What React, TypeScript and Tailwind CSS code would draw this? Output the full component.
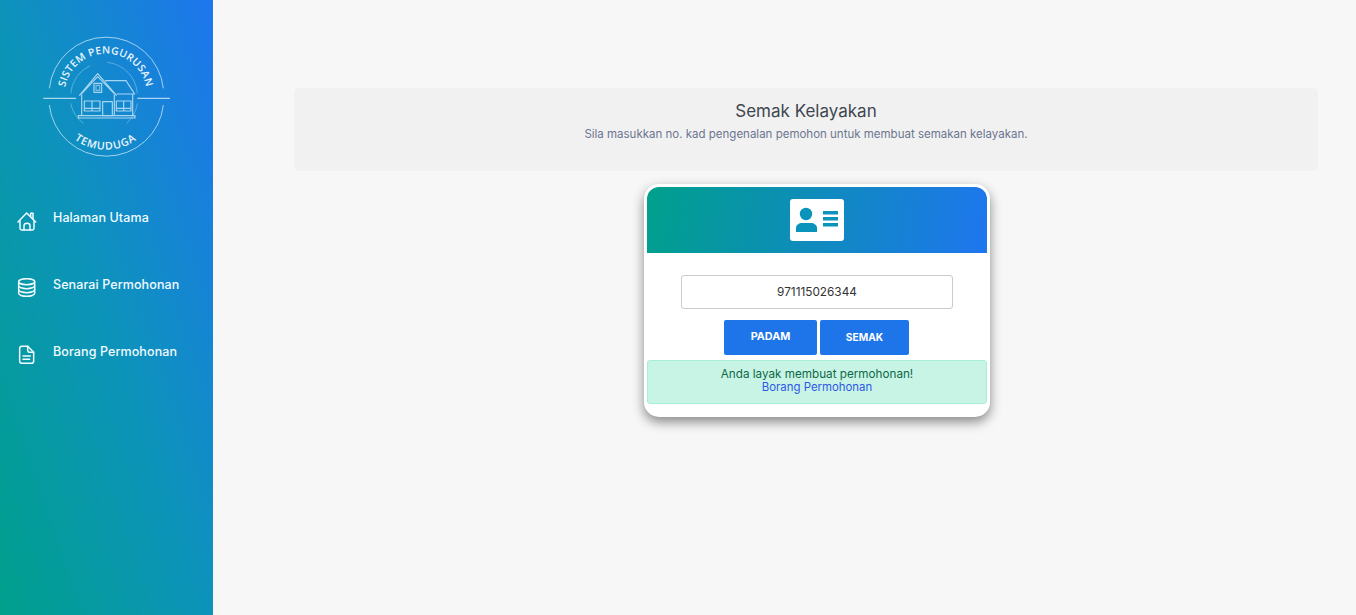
const font = { fontFamily: 'Inter, "Noto Sans", sans-serif' };

function HomeIcon() {
  return (
    <svg viewBox="0 0 60 60" className="h-[20px] w-[20px] shrink-0" fill="none" stroke="currentColor" strokeWidth="4.5" strokeLinecap="round" strokeLinejoin="round">
      <path d="M 3 33 L 29 6 L 56 33" />
      <path d="M 9 30 V 52 Q 9 57 14 57 H 46 Q 51 57 51 52 V 30" />
      <path d="M 21 57 V 44 Q 21 37 30 37 Q 39 37 39 44 V 57" />
      <path d="M 41 17 V 7 H 48 V 24" />
    </svg>
  );
}

function DatabaseIcon() {
  return (
    <svg viewBox="0 0 60 60" className="h-[20px] w-[20px] shrink-0" fill="none" stroke="currentColor" strokeWidth="4.5" strokeLinecap="round" strokeLinejoin="round">
      <ellipse cx="29" cy="11" rx="24" ry="9" />
      <path d="M 5 11 V 46 C 5 51 16 55 29 55 C 42 55 53 51 53 46 V 11" />
      <path d="M 5 23 C 5 28 16 32 29 32 C 42 32 53 28 53 23" />
      <path d="M 5 35 C 5 40 16 44 29 44 C 42 44 53 40 53 35" />
    </svg>
  );
}

function FileIcon() {
  return (
    <svg viewBox="0 0 60 60" className="h-[20px] w-[20px] shrink-0" fill="none" stroke="currentColor" strokeWidth="4.5" strokeLinecap="round" strokeLinejoin="round">
      <path d="M 32 4 H 15 Q 8 4 8 11 V 48 Q 8 55 15 55 H 43 Q 50 55 50 48 V 22 Z" />
      <path d="M 32 4 V 15 Q 32 22 39 22 H 50" />
      <path d="M 18 33 H 40 M 18 43 H 38" />
    </svg>
  );
}

const navItems = [
  { label: 'Halaman Utama', icon: HomeIcon },
  { label: 'Senarai Permohonan', icon: DatabaseIcon },
  { label: 'Borang Permohonan', icon: FileIcon },
];

function Logo() {
  return (
    <svg viewBox="0 0 510 435" className="ml-[20px] mt-[25px] h-[145px] w-[170px]" fill="none" stroke="#cfe9fb">
      <defs>
        <path id="arcTop" d="M 133 210 A 124 124 0 0 1 381 210" />
        <path id="arcBottom" d="M 97 214 A 160 160 0 0 0 417 214" />
      </defs>
      {/* outer ring */}
      <path d="M 88 190 A 172 172 0 0 1 430 190" strokeWidth="3" opacity="0.75" />
      <path d="M 88 240 A 172 172 0 0 0 430 240" strokeWidth="3" opacity="0.75" />
      <path d="M 70 220 H 168 M 352 220 H 450" strokeWidth="4" opacity="0.8" />
      {/* inner ring */}
      <path d="M 152 205 A 101 101 0 0 1 210 122" strokeWidth="2.5" opacity="0.45" />
      <path d="M 262 112 A 101 101 0 0 1 352 205" strokeWidth="2.5" opacity="0.45" />
      <path d="M 152 235 A 101 101 0 0 0 190 295" strokeWidth="2.5" opacity="0.45" />
      <path d="M 320 295 A 101 101 0 0 0 352 235" strokeWidth="2.5" opacity="0.45" />
      {/* house */}
      <g strokeWidth="3.5" strokeLinejoin="round" opacity="0.8">
        <path d="M 178 212 L 233 146 L 290 212 M 185 206 L 233 155 L 283 206" />
        <path d="M 255 167 H 318 L 344 207 H 290" />
        <path d="M 185 208 V 272 M 283 208 V 272 M 338 207 V 272" />
        <rect x="175" y="272" width="170" height="7" />
        <rect x="193" y="228" width="47" height="30" />
        <path d="M 216 228 V 258 M 193 250 H 240 M 311 228 V 258 M 289 250 H 333" />
        <rect x="289" y="228" width="44" height="30" />
        <rect x="248" y="230" width="29" height="42" />
        <rect x="222" y="175" width="23" height="27" />
        <rect x="228" y="181" width="11" height="15" opacity="0.7" />
      </g>
      <text fill="#eaf6fe" stroke="none" fontSize="31" fontWeight="600" letterSpacing="1" style={{ fontFamily: '"Open Sans", sans-serif' }}>
        <textPath href="#arcTop" startOffset="50%" textAnchor="middle">SISTEM PENGURUSAN</textPath>
      </text>
      <text fill="#eaf6fe" stroke="none" fontSize="32" fontWeight="600" letterSpacing="2.5" style={{ fontFamily: '"Open Sans", sans-serif' }}>
        <textPath href="#arcBottom" startOffset="50%" textAnchor="middle">TEMUDUGA</textPath>
      </text>
    </svg>
  );
}

function Sidebar() {
  return (
    <aside className="flex h-full w-[213px] shrink-0 flex-col bg-[linear-gradient(to_top_right,#00a08c_0%,#0d93bb_50%,#1e76ee_100%)]">
      <Logo />
      <nav className="mt-[38px] flex flex-col gap-[45px] pl-[17px]">
        {navItems.map((item) => (
          <a key={item.label} className="flex h-[22px] items-start gap-[16px] text-[12.5px] font-medium leading-[18px] tracking-[0.1px] text-[#f2fbff]">
            <span className="mt-[3px]"><item.icon /></span>
            <span className="mt-[1px]">{item.label}</span>
          </a>
        ))}
      </nav>
    </aside>
  );
}

function CardIcon() {
  return (
    <svg viewBox="0 0 54 42" className="h-[42px] w-[54px]">
      <rect width="54" height="42" rx="3" fill="#ffffff" />
      <circle cx="16" cy="15" r="6.2" fill="#0c93bb" />
      <path d="M 6 33 V 29 C 6 26 9 24 12 24 H 21 C 24 24 27 26 27 29 V 33 Z" fill="#0c93bb" />
      <path d="M 33 12 H 48 V 15.5 H 33 Z M 33 18 H 48 V 21.5 H 33 Z M 33 24 H 48 V 27.5 H 33 Z" fill="#0c93bb" />
    </svg>
  );
}

export default function App() {
  return (
    <div className="flex h-[615px] w-[1356px] overflow-hidden bg-[#f7f7f7]" style={font}>
      <Sidebar />
      <main className="flex-1 pl-[81px] pr-[38px] pt-[88px]">
        <section className="h-[83px] rounded-[5px] bg-[#f1f1f1] pt-[11px] text-center">
          <h1 className="text-[17px] font-normal leading-[24px] text-[#3e4750]">Semak Kelayakan</h1>
          <p className="mt-[3px] text-[11.5px] leading-[16px] text-[#6c7590]">
            Sila masukkan no. kad pengenalan pemohon untuk membuat semakan kelayakan.
          </p>
        </section>

        <div className="ml-[350px] mt-[13px] h-[233px] w-[346px] rounded-[15px] bg-white px-[3px] pt-[3px] shadow-[0_5px_12px_rgba(0,0,0,0.45)]">
          <div className="flex h-[66px] items-center justify-center rounded-t-[12px] bg-[linear-gradient(100deg,#00a08c_0%,#1e76ee_100%)]">
            <CardIcon />
          </div>
          <div className="flex flex-col items-center pt-[22px]">
            <input
              readOnly
              value="971115026344"
              className="h-[34px] w-[272px] rounded-[3px] border border-[#cccccc] bg-white text-center text-[11.8px] text-[#333333] outline-none"
            />
            <div className="mt-[11px] flex gap-[3px] pr-[1px]">
              <button className="h-[35px] w-[93px] rounded-[2px] bg-[#1e75ea] text-[10.8px] font-bold text-white">PADAM</button>
              <button className="h-[35px] w-[89px] rounded-[2px] bg-[#1e75ea] text-[10.2px] font-bold text-white">SEMAK</button>
            </div>
          </div>
          <div className="mt-[5px] h-[44px] rounded-[3px] border border-[#a9eeda] bg-[#c7f4e5] pt-[7px] text-center text-[11.7px] leading-[13px] text-[#0f6848]">
            <p>Anda layak membuat permohonan!</p>
            <a className="text-[11.4px] text-[#2f57e8]">Borang Permohonan</a>
          </div>
        </div>
      </main>
    </div>
  );
}
